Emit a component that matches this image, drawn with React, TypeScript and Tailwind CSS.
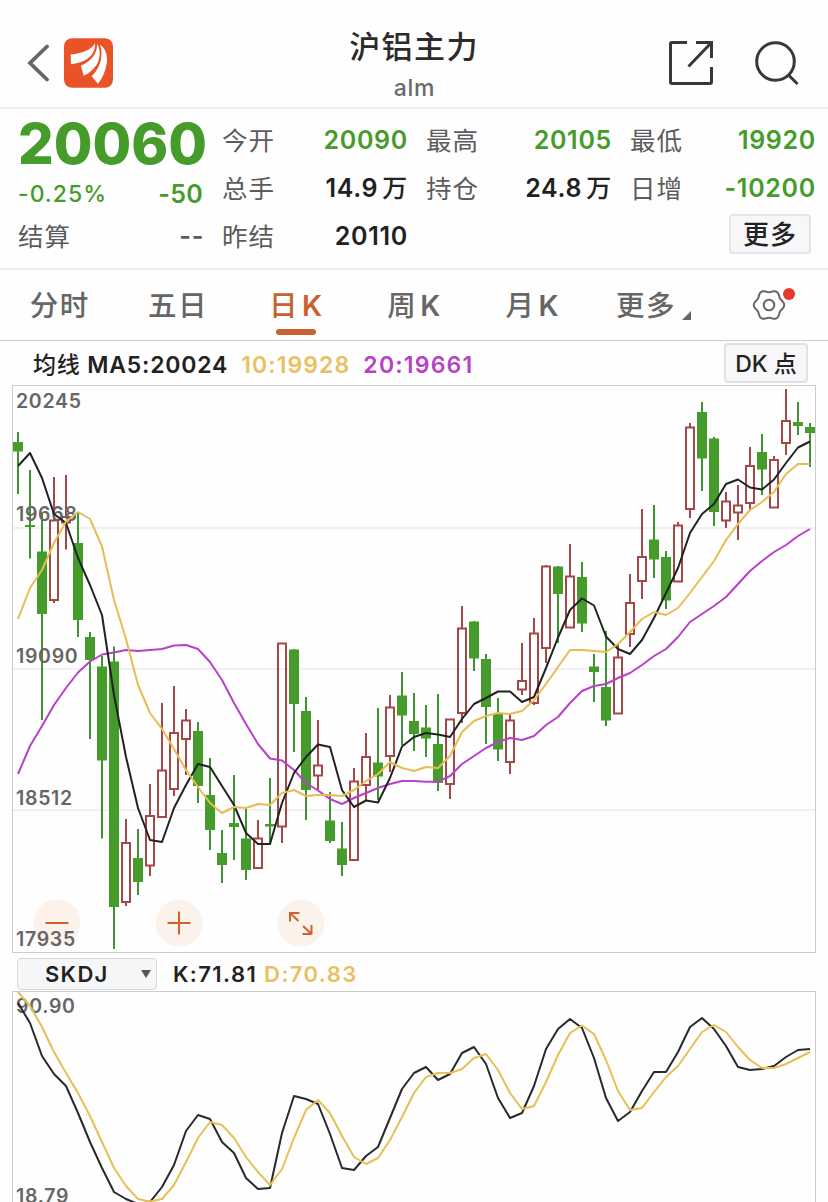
import type { ReactNode } from "react";

const STEP = 12;
const START_X = 18;

// [high, body top, body bottom, low, direction]
type Candle = [number, number, number, number, "u" | "d"];

const CANDLES: Candle[] = [
  [432, 442, 451.5, 494, "d"],
  [470, 525, 527, 558.5, "d"],
  [513, 551.5, 614, 720, "d"],
  [477, 520.5, 600, 603, "u"],
  [475, 517, 522.5, 549.5, "u"],
  [512, 543, 620, 637, "d"],
  [632, 637, 660, 739, "d"],
  [656, 666.5, 760.5, 838.5, "d"],
  [646.5, 661.5, 907, 949, "d"],
  [819, 843, 902, 906, "u"],
  [829, 858, 882, 895, "d"],
  [784, 816, 865.5, 876, "u"],
  [703, 770.5, 817, 818, "u"],
  [686, 733, 789, 796, "u"],
  [709, 720.5, 739, 775, "u"],
  [722, 731, 786, 803, "d"],
  [758, 795, 830, 850, "d"],
  [830, 853, 865, 883, "d"],
  [775, 823, 827, 860, "d"],
  [807, 838.5, 870, 880, "d"],
  [820, 838.5, 868, 868, "u"],
  [778, 824, 826.5, 845, "d"],
  [643, 643.5, 826.5, 843, "u"],
  [649, 649.5, 704, 752, "d"],
  [697, 711, 790, 820, "d"],
  [720, 765.5, 775.5, 790, "u"],
  [792, 820.5, 841, 843, "d"],
  [822, 848.5, 865, 876, "d"],
  [768, 781.5, 860, 860, "u"],
  [733, 757, 785, 801, "u"],
  [708, 762.5, 776.5, 800, "d"],
  [695, 707.5, 756, 772, "u"],
  [672, 695.5, 715.5, 745, "d"],
  [693, 721, 734, 751, "d"],
  [705, 727.5, 738.5, 757, "d"],
  [694, 744, 783, 791, "d"],
  [719, 719.5, 784, 799, "u"],
  [606, 628.5, 713, 723, "u"],
  [621, 621.5, 658.5, 671, "d"],
  [654, 659, 707, 744, "d"],
  [698, 713, 749.5, 761, "d"],
  [713, 720.5, 762, 774, "u"],
  [643, 681, 689.5, 695, "u"],
  [618, 633.5, 703, 705, "u"],
  [565, 566.5, 648, 663, "u"],
  [566, 566.5, 594, 643, "d"],
  [544, 576.5, 627.5, 628, "u"],
  [562, 577, 623.5, 632, "d"],
  [654, 666.5, 672, 702, "d"],
  [631, 687, 720.5, 726, "d"],
  [644, 657.5, 713.5, 714, "u"],
  [574, 603, 634, 647, "u"],
  [509, 557, 581, 599, "u"],
  [505, 539.5, 559.5, 578, "d"],
  [551, 557, 600.5, 609, "d"],
  [522, 525.5, 581.5, 582, "u"],
  [423, 427.5, 509, 518, "u"],
  [402, 412, 458.5, 491, "d"],
  [437, 438.5, 512, 526, "d"],
  [492, 501.5, 520.5, 528, "u"],
  [485, 505.5, 512.5, 540, "u"],
  [447, 466, 503, 511, "u"],
  [434, 452, 469.5, 495, "d"],
  [456, 460, 507.5, 508, "u"],
  [389, 421, 443, 455, "u"],
  [402, 422, 426, 435, "d"],
  [423, 427, 433, 467, "d"],
];

const MA5 = [
  466, 453, 478, 514, 523, 558, 585, 615, 695, 757, 808, 840, 842, 808, 785, 764, 767, 786, 805, 833, 844, 844,
  803, 773, 757, 744.5, 747, 790, 807, 800.5, 802.5, 778, 746.5, 737, 733, 734.5, 737, 719, 704, 698, 691.5,
  691.5, 702, 697, 668, 637.5, 610, 598.5, 605.5, 636.5, 649, 654, 640, 618, 593, 568, 533, 514, 504, 484, 479.5,
  487.5, 489.5, 479.5, 463, 447.5, 441.5,
];

const MA10 = [
  619, 588, 570, 543, 521.5, 512, 519, 546.5, 600, 639, 685, 713, 729, 749, 770, 787, 803, 813, 807, 808, 804, 805,
  793, 790, 796, 795, 795, 796, 790, 781, 774, 762, 768, 771, 767, 768, 756, 732, 721, 716, 713, 714, 711, 700, 684,
  667, 650, 650, 651, 652, 644, 632, 619, 612, 615, 608, 593, 577, 561, 540, 524, 510, 502, 492, 474, 464, 464,
];

const MA20 = [
  774, 746, 726, 705, 688, 672.5, 661.5, 654.5, 652.5, 650, 651, 650, 649, 645.5, 645, 649, 662, 680, 703, 724, 744,
  758.5, 760.5, 770, 783, 790.5, 799, 804, 798, 793, 788, 784, 781, 781, 781.7, 781.7, 776, 764, 756, 748, 742, 738,
  740, 736, 725, 717, 703, 691, 686, 684, 678, 673, 665, 656, 649, 637, 622, 614, 606, 597, 584, 571, 561, 552, 545,
  536, 529,
];

const SKDJ_K = [
  1003, 1023, 1056, 1074, 1086, 1113, 1142, 1168, 1192, 1199, 1204, 1202, 1187, 1165, 1131, 1115, 1119, 1142, 1153,
  1178, 1189, 1188, 1133, 1096, 1099, 1104, 1134, 1168, 1170, 1156, 1147, 1118, 1089, 1073, 1067, 1080, 1074, 1053,
  1047, 1064, 1098, 1118, 1113, 1086, 1049, 1029, 1019, 1028, 1058, 1098, 1121, 1112, 1091, 1072, 1072, 1052, 1027,
  1018, 1029, 1046, 1067, 1070, 1069, 1066, 1057, 1050, 1049,
];

const SKDJ_D = [
  992, 1006, 1027, 1052, 1073, 1093, 1116, 1142, 1168, 1186, 1199, 1201.5, 1199, 1185, 1162, 1138, 1122, 1125, 1138,
  1157, 1172, 1185, 1169, 1138, 1110, 1100, 1113, 1136, 1157, 1164, 1158, 1140, 1117, 1093, 1077, 1073, 1073, 1069,
  1058, 1054, 1070, 1093, 1109, 1106, 1082, 1055, 1033, 1025.5, 1034, 1060, 1091, 1110, 1108, 1092, 1077, 1066, 1049,
  1032, 1025, 1032, 1047, 1060, 1068, 1068, 1064, 1058, 1052,
];

const toPoints = (values: number[]) => values.map((y, i) => `${START_X + i * STEP},${y}`).join(" ");

const Line = ({ values, color }: { values: number[]; color: string }) => (
  <polyline points={toPoints(values)} fill="none" stroke={color} strokeWidth={2} strokeLinejoin="round" />
);

const AxisLabel = ({ y, children }: { y: number; children: string }) => (
  <text x={16} y={y} className="fill-[#666] text-[19.5px] font-semibold tracking-[0.7px]">
    {children}
  </text>
);

const CandleShape = ({ candle, x }: { candle: Candle; x: number }) => {
  const [high, top, bottom, low, dir] = candle;
  if (dir === "d") {
    return (
      <g>
        <rect x={x - 1} y={high} width={2} height={low - high} fill="#3f9332" />
        <rect x={x - 5} y={top} width={10} height={bottom - top} fill="#459c2a" />
      </g>
    );
  }
  return (
    <g stroke="#a34747" strokeWidth={2} fill="none">
      <path d={`M${x} ${high}V${top}M${x} ${bottom}V${low}`} />
      <rect x={x - 4} y={top} width={8} height={bottom - top} />
    </g>
  );
};

const PriceChart = () => (
  <svg viewBox="12 385 804 568" className="block h-[568px] w-[804px]">
    <g fill="none" stroke="#f3eff3" strokeWidth={2}>
      <path d="M12 528H816M12 669H816M12 810H816" />
    </g>
    <g fill="#fcf2ec">
      <circle cx={57} cy={923} r={23.5} />
      <circle cx={179} cy={923} r={23.5} />
      <circle cx={301} cy={923} r={23.5} />
    </g>
    <g fill="none" stroke="#d2602d" strokeWidth={2}>
      <path d="M45.500 923H68.500" />
      <path d="M167.500 923H190.500M179 911.500V934.500" />
      <path d="M290 921.500V913H299.500M290.500 913.500L298.500 921M311.500 934H302.500M311.500 925V934.500M311 933.500L303 926" />
    </g>
    {CANDLES.map((candle, i) => (
      <CandleShape key={i} candle={candle} x={START_X + i * STEP} />
    ))}
    <AxisLabel y={408}>20245</AxisLabel>
    <AxisLabel y={521}>19668</AxisLabel>
    <AxisLabel y={663}>19090</AxisLabel>
    <AxisLabel y={805}>18512</AxisLabel>
    <AxisLabel y={945.5}>17935</AxisLabel>
    <Line values={MA20} color="#b940c9" />
    <Line values={MA5} color="#222" />
    <Line values={MA10} color="#e6bd55" />
    <rect x={12.5} y={385.5} width={803} height={567} fill="none" stroke="#ccc" />
  </svg>
);

const SkdjChart = () => (
  <svg viewBox="12 991 804 260" className="block h-[260px] w-[804px] shrink-0">
    <AxisLabel y={1012.5}>90.90</AxisLabel>
    <AxisLabel y={1203}>18.79</AxisLabel>
    <Line values={SKDJ_K} color="#29292d" />
    <Line values={SKDJ_D} color="#e6c055" />
    <rect x={12.5} y={991.5} width={803} height={259} fill="none" stroke="#ccc" />
  </svg>
);

const Logo = () => (
  <svg viewBox="192 114 147 149" className="h-[50px] w-[49px]">
    <rect x={192} y={114} width={147} height={149} rx={24} fill="#ea5328" />
    <g fill="#fff">
      <path d="M285 129C275 148 250 158 212 163L213 192C232 190 247 186 259 178C276 167 286 150 285 129Z" />
      <path d="M291 131C293 158 276 182 243 197L251 227C265 220 279 209 289 195C301 177 303 150 291 131Z" />
      <path d="M300 134C307 153 306 177 297 197C291 210 284 220 275 228L294 251C309 232 319 207 321 182C322 160 315 144 300 134Z" />
    </g>
  </svg>
);

const gearPath = () => {
  const points = Array.from({ length: 120 }, (_, i) => {
    const angle = (i / 120) * Math.PI * 2;
    const radius = 14 + 1.2 * Math.cos(6 * angle);
    return `${(17 + radius * Math.cos(angle)).toFixed(2)} ${(17 + radius * Math.sin(angle)).toFixed(2)}`;
  });
  return `M${points.join("L")}Z`;
};

const GearIcon = () => (
  <svg viewBox="0 0 34 34" className="size-[34px]" fill="none" stroke="#666" strokeWidth={2}>
    <path d={gearPath()} />
    <circle cx={17} cy={17} r={5.3} />
  </svg>
);

const Header = () => (
  <header className="grid h-[109px] grid-cols-3 border-b-2 border-[#ececec] pt-[18px]">
    <div className="flex h-[90px] items-center gap-[14px] pl-[27px]">
      <svg viewBox="0 0 23 38" className="h-[38px] w-[23px]" fill="none" stroke="#666" strokeWidth={3.8}>
        <path d="M20 2.500L3 19L20 35.500" strokeLinecap="round" />
      </svg>
      <Logo />
    </div>
    <div className="flex flex-col items-center">
      <h1 className="pt-[9px] text-[31px] leading-10 font-medium tracking-[1.4px] text-[#2b2b2b]">沪铝主力</h1>
      <p className="pt-[7px] pl-px text-[23px] leading-7 font-medium tracking-[0.7px] text-[#6a6a6a]">alm</p>
    </div>
    <div className="flex h-[90px] items-center justify-end gap-10 pr-[29px]">
      <svg viewBox="0 0 46 46" className="size-[46px]" fill="none" stroke="#383838" strokeWidth={3}>
        <path d="M19 2.500H4Q2.500 2.500 2.500 4V42Q2.500 43.500 4 43.500H42Q43.500 43.500 43.500 42V27" />
        <path d="M28 2.500H43.500V18M43 3L20.500 26.500" />
      </svg>
      <svg viewBox="0 0 45 46" className="h-[46px] w-[45px]" fill="none" stroke="#383838" strokeWidth={3}>
        <circle cx={21.500} cy={21.500} r={18.8} />
        <path d="M34.500 35L43.500 44" />
      </svg>
    </div>
  </header>
);

type StatProps = { label: string; value: ReactNode; color?: string };

const Stat = ({ label, value, color = "text-[#222]" }: StatProps) => (
  <div className="flex h-12 items-center justify-between whitespace-nowrap">
    <span className="-ml-px text-[25.5px] tracking-[1px] text-[#5c5c5c]">{label}</span>
    <span className={`-mr-px text-[25px] font-semibold tracking-[0.7px] ${color}`}>{value}</span>
  </div>
);

const Wan = ({ children }: { children: string }) => (
  <>
    {children}
    <span className="pl-1 font-medium">万</span>
  </>
);

const GREEN = "text-[#459c2a]";

const Quote = () => (
  <section className="grid h-[161px] grid-cols-[repeat(4,184px)] gap-x-5 border-b-2 border-[#ececec] pt-2 pl-[19px]">
    <div>
      <div className={`-ml-px h-[54px] text-[56px] leading-[54px] font-extrabold whitespace-nowrap ${GREEN}`}>
        20060
      </div>
      <div className={`flex h-[42px] items-center justify-between pt-1 ${GREEN}`}>
        <span className="-ml-px text-[23px] font-medium tracking-[1px]">-0.25%</span>
        <span className="pt-0.5 text-[25px] font-semibold tracking-[0.3px]">-50</span>
      </div>
      <Stat label="结算" value="--" color="text-[#5c5c5c]" />
    </div>
    <div>
      <Stat label="今开" value="20090" color={GREEN} />
      <Stat label="总手" value={<Wan>14.9</Wan>} />
      <Stat label="昨结" value="20110" />
    </div>
    <div>
      <Stat label="最高" value="20105" color={GREEN} />
      <Stat label="持仓" value={<Wan>24.8</Wan>} />
    </div>
    <div>
      <Stat label="最低" value="19920" color={GREEN} />
      <Stat label="日增" value="-10200" color={GREEN} />
      <div className="flex justify-end pt-px pr-1">
        <button className="h-10 w-[82px] rounded border-2 border-[#e4e4ea] bg-[#f7f7fa] text-[26px] leading-[38px] font-medium tracking-[1px] whitespace-nowrap text-[#222]">
          更多
        </button>
      </div>
    </div>
  </section>
);

const TABS = ["分时", "五日", "日K", "周K", "月K"];

const Tabs = () => (
  <nav className="grid h-[71px] grid-cols-7 border-b border-[#ccc] text-[28.5px] font-medium tracking-[1.5px] text-[#666]">
    {TABS.map((tab) => (
      <div
        key={tab}
        className={`relative flex items-center justify-center pt-0.5 pl-px whitespace-nowrap ${tab === "日K" ? "text-[#c8602f]" : ""}`}
      >
        {tab.endsWith("K") ? (
          <>
            {tab[0]}
            <span className="pl-[3px] font-semibold">K</span>
          </>
        ) : (
          tab
        )}
        {tab === "日K" && <span className="absolute bottom-[5px] left-[39px] h-1.5 w-10 rounded-full bg-[#c8602f]" />}
      </div>
    ))}
    <div className="flex items-center justify-center gap-1.5 pt-0.5 pl-1.5 whitespace-nowrap">
      更多
      <svg viewBox="0 0 9 9" className="mt-[18px] size-[9px]">
        <path d="M9 0V9H0Z" fill="#666" />
      </svg>
    </div>
    <div className="relative flex items-center justify-center">
      <GearIcon />
      <span className="absolute top-[18px] right-[33px] size-3 rounded-full bg-[#e8382b]" />
    </div>
  </nav>
);

const MaBar = () => (
  <div className="flex h-11 items-center pr-5 pl-[33px] text-[23px] font-semibold tracking-[0.8px] whitespace-nowrap">
    <span className="pt-1 text-[#222]">
      <span className="font-medium">均线</span> MA5:20024
    </span>
    <span className="pt-1 pl-[13px] tracking-[1.1px] text-[#e9c063]">10:19928</span>
    <span className="pt-1 pl-[13px] tracking-[1.2px] text-[#b940c9]">20:19661</span>
    <button className="ml-auto h-10 w-[84px] rounded border-2 border-[#e0e0e6] bg-[#f7f7fa] text-[23px] leading-[38px] font-medium tracking-normal text-[#222]">
      DK 点
    </button>
  </div>
);

const IndicatorBar = () => (
  <div className="flex h-[38px] items-center gap-4 pt-1 pl-[17px] text-[22px] font-semibold whitespace-nowrap">
    <button className="flex h-8 w-[140px] items-center justify-between rounded border border-[#d6d6da] bg-[#f5f6f7] pr-[5px] pl-[27px] tracking-[1.3px] text-[#222]">
      SKDJ
      <svg viewBox="0 0 10 8" className="h-2 w-[10px]">
        <path d="M0 0H10L5 8Z" fill="#555" />
      </svg>
    </button>
    <div className="flex gap-[7px] tracking-[1.4px]">
      <span className="text-[#222]">K:71.81</span>
      <span className="text-[#e9c063]">D:70.83</span>
    </div>
  </div>
);

export default function App() {
  return (
    <main className="h-[1202px] w-[828px] overflow-hidden bg-[#fefefe] font-['Inter','Noto_Sans_CJK_SC',sans-serif]">
      <Header />
      <Quote />
      <Tabs />
      <MaBar />
      <div className="pl-3">
        <PriceChart />
      </div>
      <IndicatorBar />
      <div className="pl-3">
        <SkdjChart />
      </div>
    </main>
  );
}
